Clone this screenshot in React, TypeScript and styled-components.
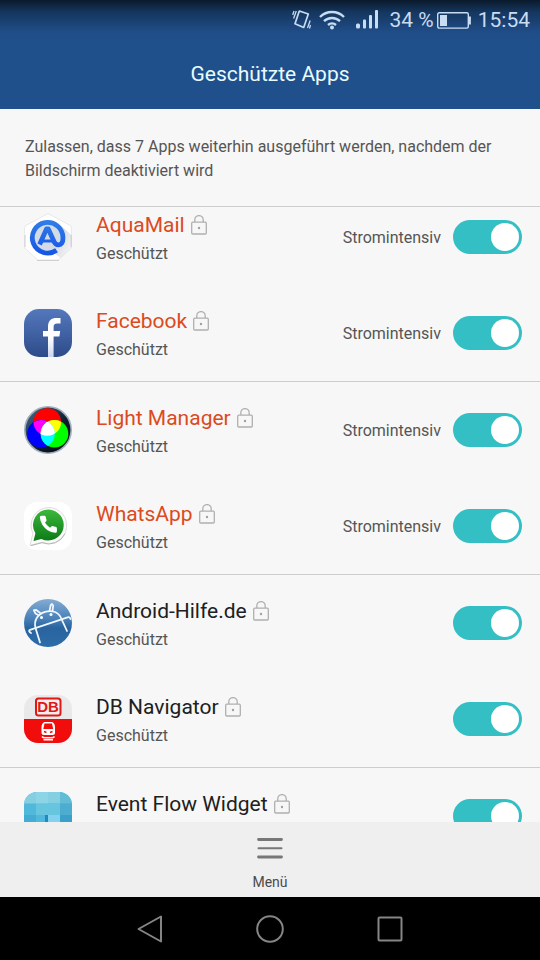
import React, { useId, useLayoutEffect, useRef, useState } from "react";
import styled, { createGlobalStyle } from "styled-components";

const GlobalStyle = createGlobalStyle`
  *, *::before, *::after { box-sizing: border-box; }
  body { margin: 0; background: #000; font-family: Roboto, sans-serif; }
`;

const Screen = styled.div`
  display: flex;
  flex-direction: column;
  height: 100vh;
  background: #f7f7f7;
  color: #555;
`;

const Top = styled.header`
  flex: none;
  background: linear-gradient(#0a1a2c 0, #15365e 12px, #1f4d88 32px, #1f508b 40px);
`;

const StatusBar = styled.div`
  display: flex;
  align-items: center;
  justify-content: flex-end;
  height: 40px;
  padding: 0 10px;
  color: #c8dcf2;
  font-size: 21px;
  line-height: 24px;
`;

const StatusIcon = styled.svg<{ $gap: number }>`
  flex: none;
  margin-right: ${(p) => p.$gap}px;
`;

const Percent = styled.span`
  margin-right: 3px;
`;

const Title = styled.h1`
  margin: 0;
  padding: 20px 24px 21px;
  color: #e9fbff;
  font-size: 21px;
  font-weight: 400;
  line-height: 28px;
  text-align: center;
`;

const Intro = styled.p`
  flex: none;
  margin: 0;
  padding: 26px 24px 23px 25px;
  border-bottom: 1px solid #cdcdcd;
  font-size: 16px;
  line-height: 24px;
`;

const AppList = styled.ul`
  flex: 1;
  min-height: 0;
  margin: 0;
  padding: 0;
  overflow-y: auto;
  scrollbar-width: none;
  list-style: none;
`;

const AppRow = styled.li<{ $divided: boolean }>`
  display: flex;
  align-items: center;
  height: ${(p) => (p.$divided ? 97 : 96)}px;
  padding: 0 18px 0 24px;
  border-bottom: ${(p) => (p.$divided ? "1px solid #cdcdcd" : "0")};
`;

const AppIcon = styled.svg`
  flex: none;
  width: 48px;
  height: 48px;
  margin-right: 24px;
`;

const AppText = styled.div`
  flex: 1;
  min-width: 0;
  padding-top: 6px;
`;

const NameLine = styled.div`
  display: flex;
  align-items: center;
  gap: 6px;
`;

const AppName = styled.label<{ $intensive: boolean }>`
  color: ${(p) => (p.$intensive ? "#dc4a20" : "#202020")};
  font-size: 21px;
  line-height: 28px;
  white-space: nowrap;
`;

const AppState = styled.div`
  font-size: 16px;
  line-height: 30px;
`;

const PowerNote = styled.span`
  margin-right: 12px;
  padding-top: 2px;
  font-size: 16px;
  line-height: 28px;
`;

const Switch = styled.input`
  display: flex;
  flex: none;
  align-items: center;
  justify-content: flex-start;
  width: 69px;
  height: 34px;
  margin: 0;
  padding: 3px;
  border-radius: 17px;
  background: #bdbdbd;
  appearance: none;
  cursor: pointer;

  &::before {
    width: 28px;
    height: 28px;
    border-radius: 50%;
    background: #fff;
    content: "";
  }

  &:checked {
    justify-content: flex-end;
    background: #33bfc4;
  }
`;

const MenuBar = styled.footer`
  display: flex;
  flex: none;
  justify-content: center;
  background: #efefef;
`;

const MenuButton = styled.button`
  display: flex;
  flex-direction: column;
  align-items: center;
  gap: 13px;
  padding: 15px 24px 6px;
  border: 0;
  background: none;
  color: #4a4a4a;
  font-family: inherit;
  font-size: 14px;
  line-height: 18px;
`;

const NavBar = styled.nav`
  display: flex;
  flex: none;
  align-items: center;
  justify-content: center;
  gap: 72px;
  height: 63px;
  background: #000;
`;

const NavButton = styled.button`
  display: flex;
  align-items: center;
  justify-content: center;
  width: 48px;
  height: 48px;
  padding: 0;
  border: 0;
  background: none;
  color: #858585;
`;

const Lock = () => (
  <svg width="16" height="20" viewBox="0 0 16 20" fill="none" stroke="#b0b0b0" strokeWidth="1.3" aria-hidden="true">
    <rect x="0.7" y="7.2" width="14.6" height="11.8" rx="1" />
    <path d="M3.8 7V4.8a4.2 4.2 0 0 1 8.4 0V7" />
    <circle cx="8" cy="13" r="1.2" fill="#a0a0a0" stroke="none" />
  </svg>
);

const AquaMail = () => (
  <AppIcon viewBox="0 0 48 48" aria-hidden="true">
    <defs>
      <linearGradient id="aquaShade" x1="0" y1="0" x2="1" y2="1">
        <stop offset="0.3" stopColor="#b5bcc8" />
        <stop offset="1" stopColor="#f6f6f6" />
      </linearGradient>
      <linearGradient id="aquaBlue" x1="0" y1="0" x2="0" y2="1">
        <stop offset="0" stopColor="#2f7be8" />
        <stop offset="1" stopColor="#1757e6" />
      </linearGradient>
    </defs>
    <path d="M24 .6 46 12.4q1.4.8 1.4 2.4v19q0 1.5-1.2 2.2L34 47.2H14L1.8 36Q.6 35.3.6 33.8v-19q0-1.6 1.4-2.4Z" fill="#fff" stroke="#e3e3e3" strokeWidth=".8" />
    <path d="M36 12 47.4 22v12.5L37 45l-9-6Z" fill="url(#aquaShade)" opacity=".6" />
    <path d="M13 47.4h22M1 22v12M47.2 22v12" stroke="#c4c4c4" strokeWidth=".8" />
    <circle cx="23" cy="25" r="14" fill="#d3dbe6" />
    <path d="M32.5 37.2A15.3 15.3 0 1 1 38.9 25.5c.2 4-1.7 6.3-4.2 6.3-2.3 0-3.8-1-4.8-3.5L24.3 16h-1.8L15.6 31.5" fill="none" stroke="url(#aquaBlue)" strokeWidth="4.8" strokeLinejoin="round" />
    <path d="M18 28h10" stroke="#1f63e6" strokeWidth="3" />
  </AppIcon>
);

const Facebook = () => (
  <AppIcon viewBox="0 0 48 48" aria-hidden="true">
    <defs>
      <linearGradient id="fbBlue" x1="0" y1="0" x2="0" y2="1">
        <stop offset="0" stopColor="#5478bd" />
        <stop offset="1" stopColor="#2e4b89" />
      </linearGradient>
      <linearGradient id="fbMark" x1="0" y1="0" x2="0" y2="1">
        <stop offset="0.5" stopColor="#fff" />
        <stop offset="1" stopColor="#cbd6ec" />
      </linearGradient>
    </defs>
    <rect width="48" height="48" rx="15" fill="url(#fbBlue)" />
    <path d="M24 48V27.5h-5V22h5v-4.5C24 11.5 27.5 9 32.5 9h4v5.5h-3.4c-2.6 0-3.5 1.2-3.5 3.5v4h6.6l-.8 5.5h-5.8V48Z" fill="url(#fbMark)" />
  </AppIcon>
);

const LightManager = () => (
  <AppIcon viewBox="0 0 48 48" aria-hidden="true">
    <defs>
      <linearGradient id="lightBase" x1="0" y1="0" x2="1" y2="1">
        <stop offset="0" stopColor="#4a708f" />
        <stop offset="0.6" stopColor="#0d1c2c" />
        <stop offset="1" stopColor="#02070c" />
      </linearGradient>
      <clipPath id="lightRed"><circle cx="23.3" cy="16" r="13.8" /></clipPath>
      <clipPath id="lightBlue"><circle cx="17" cy="27.8" r="13.8" /></clipPath>
    </defs>
    <circle cx="24" cy="24" r="23.2" fill="url(#lightBase)" stroke="#a3b0bf" strokeWidth="1.6" />
    <circle cx="23.3" cy="16" r="13.8" fill="#f00" />
    <circle cx="17" cy="27.8" r="13.8" fill="#00f" />
    <circle cx="30.5" cy="27.8" r="13.8" fill="#0f0" />
    <circle cx="17" cy="27.8" r="13.8" fill="#f0f" clipPath="url(#lightRed)" />
    <circle cx="30.5" cy="27.8" r="13.8" fill="#ff0" clipPath="url(#lightRed)" />
    <circle cx="30.5" cy="27.8" r="13.8" fill="#0ff" clipPath="url(#lightBlue)" />
    <g clipPath="url(#lightRed)">
      <circle cx="30.5" cy="27.8" r="13.8" fill="#fff" clipPath="url(#lightBlue)" />
    </g>
  </AppIcon>
);

const WhatsApp = () => (
  <AppIcon viewBox="0 0 48 48" aria-hidden="true">
    <defs>
      <linearGradient id="waGreen" x1="0" y1="0" x2="0" y2="1">
        <stop offset="0" stopColor="#3cb83c" />
        <stop offset="1" stopColor="#0d7a17" />
      </linearGradient>
    </defs>
    <rect width="48" height="48" rx="13" fill="#fff" />
    <path d="M25 5.5A18 18 0 0 0 8.9 31.5L6 43.5l12-3.3A18 18 0 1 0 25 5.5Z" fill="#fbfbfb" stroke="#dedede" strokeWidth="1" />
    <path d="M7 43.6 18 40.7a18 18 0 0 0 23-9" fill="none" stroke="#b5b5b5" strokeWidth="1" />
    <path d="M24.5 7.5a15.5 15.5 0 0 0-13.1 23.7L9.5 39l7.9-2.1A15.5 15.5 0 1 0 24.5 7.5Z" fill="url(#waGreen)" />
    <path transform="translate(14 12) scale(.86)" d="M22 16.92v3a2 2 0 0 1-2.18 2 19.79 19.79 0 0 1-8.63-3.07 19.5 19.5 0 0 1-6-6 19.79 19.79 0 0 1-3.07-8.67A2 2 0 0 1 4.11 2h3a2 2 0 0 1 2 1.72 12.84 12.84 0 0 0 .7 2.81 2 2 0 0 1-.45 2.11L8.09 9.91a16 16 0 0 0 6 6l1.27-1.27a2 2 0 0 1 2.11-.45 12.84 12.84 0 0 0 2.81.7A2 2 0 0 1 22 16.92z" fill="#fff" />
  </AppIcon>
);

const AndroidHilfe = () => (
  <AppIcon viewBox="0 0 48 48" aria-hidden="true">
    <defs>
      <linearGradient id="ahBlue" x1="0" y1="0" x2="0" y2="1">
        <stop offset="0" stopColor="#83acd3" />
        <stop offset="0.4" stopColor="#4a82b9" />
        <stop offset="0.6" stopColor="#2a649f" />
        <stop offset="1" stopColor="#2c6ca9" />
      </linearGradient>
    </defs>
    <circle cx="24" cy="24" r="24" fill="url(#ahBlue)" />
    <g fill="none" stroke="#eef6ff" strokeWidth="1.8" strokeLinecap="round" strokeLinejoin="round">
      <path d="M7 34c-2-1-2.5-2.5-1-3.2L43.5 18.3c1.5-.4 2.5.2 3 1.7" />
      <path d="M16 43.5 11.5 29C9.5 21 14 15 21 12.8c7-2 14 .2 16.5 7.2L43 32" />
      <path d="m14.5 16.2-3-1.7-1.7-3.3 2.5-.2 4.5 3.5M25.5 12l1.2-6 1.3-1 1.2 1.5-.7 5.7" />
    </g>
    <circle cx="17.5" cy="18.5" r="1.5" fill="#fff" />
    <circle cx="27" cy="15.5" r="1.5" fill="#fff" />
  </AppIcon>
);

const DbText = styled.text`
  font-family: "Liberation Sans", sans-serif;
  font-size: 15px;
  font-weight: 700;
`;

const DbNavigator = () => (
  <AppIcon viewBox="0 0 48 48" aria-hidden="true">
    <defs>
      <clipPath id="dbClip"><rect width="48" height="48" rx="14" /></clipPath>
    </defs>
    <g clipPath="url(#dbClip)">
      <rect width="48" height="48" fill="#e9e9e9" />
      <rect y="24" width="48" height="24" fill="#f20d0d" />
      <rect x="12" y="3.5" width="24.5" height="17" rx="2.5" fill="#f3eeee" stroke="#e01818" strokeWidth="2" />
      <DbText x="24" y="17" textAnchor="middle" fill="#e01818">DB</DbText>
      <path d="M20.5 27h7.5q3 1 3 5.5v5q0 2.5-2.5 2.5H20q-2.5 0-2.5-2.5v-5q0-4.5 3-5.5Z" fill="#fff" />
      <path d="M20.5 28.5h7.5l1.2 5.5h-9.9Z" fill="#f20d0d" />
      <path d="M20 36.5l2.5 1M28.5 36.5l-2.5 1" stroke="#f20d0d" strokeWidth="1.4" />
      <path d="M18 41.5q1 1.3 3 1.3h6.5q2 0 3-1.3M19.5 44.8h9.5" stroke="#fff" strokeWidth="1.5" fill="none" />
    </g>
  </AppIcon>
);

const EventFlow = () => (
  <AppIcon viewBox="0 0 48 48" aria-hidden="true">
    <defs>
      <clipPath id="eventClip"><rect width="48" height="48" rx="13" /></clipPath>
    </defs>
    <g clipPath="url(#eventClip)">
      <rect width="48" height="48" fill="#50b8da" />
      <path d="M0 0h36v11.5H0Z" fill="#85cfe2" />
      <path d="M12 0h12v11.5H12Z" fill="#8dd5e6" />
      <path d="M36 0h12v11.5H36Z" fill="#62bcd5" />
      <path d="M12 11.5h24V23H12Z" fill="#68c5df" />
      <path d="M36 11.5h12V23H36Z" fill="#4dadd0" />
      <path d="M0 23h12v25H0Z" fill="#42acd2" />
      <path d="M21 23h3v25h-3Z" fill="#2388bb" />
      <path d="M24 23h12v12H24Z" fill="#82d1ee" />
      <path d="M36 23h12v25H36Z" fill="#3a9fc9" />
    </g>
  </AppIcon>
);

type App = { name: string; icon: () => React.JSX.Element; intensive: boolean };

const apps: App[] = [
  { name: "AquaMail", icon: AquaMail, intensive: true },
  { name: "Facebook", icon: Facebook, intensive: true },
  { name: "Light Manager", icon: LightManager, intensive: true },
  { name: "WhatsApp", icon: WhatsApp, intensive: true },
  { name: "Android-Hilfe.de", icon: AndroidHilfe, intensive: false },
  { name: "DB Navigator", icon: DbNavigator, intensive: false },
  { name: "Event Flow Widget", icon: EventFlow, intensive: false },
];

const AppEntry = ({ app, divided }: { app: App; divided: boolean }) => {
  const id = useId();
  const [on, setOn] = useState(true);
  const Icon = app.icon;
  return (
    <AppRow $divided={divided}>
      <Icon />
      <AppText>
        <NameLine>
          <AppName htmlFor={id} $intensive={app.intensive}>{app.name}</AppName>
          <Lock />
        </NameLine>
        <AppState>Geschützt</AppState>
      </AppText>
      {app.intensive && <PowerNote>Stromintensiv</PowerNote>}
      <Switch id={id} type="checkbox" role="switch" checked={on} onChange={() => setOn(!on)} />
    </AppRow>
  );
};

const INITIAL_SCROLL = 18;

export default function App() {
  const list = useRef<HTMLUListElement>(null);
  useLayoutEffect(() => {
    if (list.current) list.current.scrollTop = INITIAL_SCROLL;
  }, []);

  return (
    <Screen>
      <GlobalStyle />
      <Top>
        <StatusBar>
          <StatusIcon $gap={8} width="19" height="20" viewBox="0 0 19 20" fill="none" stroke="currentColor" strokeWidth="1.7" aria-hidden="true">
            <path d="m7.3 1 9 3-4.6 13.500-8.700-3.800Z" strokeLinejoin="round" />
            <path d="M4.300 1 1.600 8.500M2 1 .7 5M18.200 10.500 15.500 18M18.500 15l-1 3.500" strokeWidth="1.3" />
          </StatusIcon>
          <StatusIcon $gap={11} width="26" height="20" viewBox="0 0 26 20" fill="none" stroke="currentColor" strokeWidth="2.4" aria-hidden="true">
            <path d="M1 7a17 17 0 0 1 24 0M5 11.2a11.5 11.5 0 0 1 16 0M9 15a6 6 0 0 1 8 0" />
            <circle cx="13" cy="17.5" r="2" fill="currentColor" stroke="none" />
          </StatusIcon>
          <StatusIcon $gap={11} width="23" height="20" viewBox="0 0 23 20" fill="currentColor" aria-hidden="true">
            <rect x="0" y="13.5" width="4" height="5" rx="1.5" />
            <rect x="7" y="9.5" width="3" height="9" rx="1" />
            <rect x="13" y="5" width="3" height="13.5" rx="1" />
            <rect x="19" y="0" width="3" height="18.5" rx="1" />
          </StatusIcon>
          <Percent>34 %</Percent>
          <StatusIcon $gap={7} width="34" height="17" viewBox="0 0 34 17" fill="none" stroke="currentColor" aria-hidden="true">
            <rect x="0.7" y="0.7" width="30.6" height="15.4" rx="1.5" strokeWidth="1.4" />
            <rect x="3" y="3" width="7" height="11" fill="currentColor" stroke="none" />
            <path d="M32.8 4.5v8" strokeWidth="2.2" />
          </StatusIcon>
          <span>15:54</span>
        </StatusBar>
        <Title>Geschützte Apps</Title>
      </Top>
      <Intro>Zulassen, dass 7 Apps weiterhin ausgeführt werden, nachdem der Bildschirm deaktiviert wird</Intro>
      <AppList ref={list}>
        {apps.map((app, i) => (
          <AppEntry key={app.name} app={app} divided={i % 2 === 1} />
        ))}
      </AppList>
      <MenuBar>
        <MenuButton type="button">
          <svg width="26" height="23" viewBox="0 0 26 23" stroke="#777" strokeLinecap="round" aria-hidden="true">
            <path d="M1.5 2.5h23M1.5 20h23" strokeWidth="2.8" />
            <path d="M1.5 11.3h23" strokeWidth="2" />
          </svg>
          Menü
        </MenuButton>
      </MenuBar>
      <NavBar>
        <NavButton type="button" aria-label="Zurück">
          <svg width="26" height="28" viewBox="0 0 26 28" fill="none" stroke="currentColor" strokeWidth="2" strokeLinejoin="round" aria-hidden="true">
            <path d="M24 1.5v25L1.5 14Z" />
          </svg>
        </NavButton>
        <NavButton type="button" aria-label="Startseite">
          <svg width="28" height="28" viewBox="0 0 28 28" fill="none" stroke="currentColor" strokeWidth="2" aria-hidden="true">
            <circle cx="14" cy="14" r="12.8" />
          </svg>
        </NavButton>
        <NavButton type="button" aria-label="Letzte Apps">
          <svg width="26" height="26" viewBox="0 0 26 26" fill="none" stroke="currentColor" strokeWidth="2" aria-hidden="true">
            <rect x="1.5" y="1.5" width="23" height="23" rx="1" />
          </svg>
        </NavButton>
      </NavBar>
    </Screen>
  );
}
